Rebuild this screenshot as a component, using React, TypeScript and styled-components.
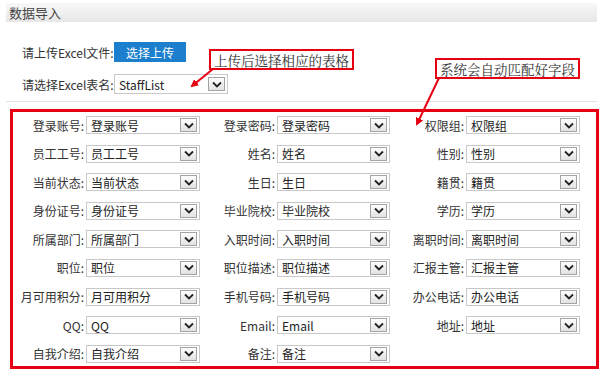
import React from "react";
import styled, { createGlobalStyle } from "styled-components";

const GlobalStyle = createGlobalStyle`
  html, body {
    margin: 0;
    padding: 0;
    background: #ffffff;
  }
  body {
    font-family: "Noto Sans CJK SC", "Liberation Sans", sans-serif;
    color: #333;
  }
`;

const Page = styled.div`
  position: relative;
  width: 600px;
  height: 380px;
  overflow: hidden;
  background: #fff;
`;

const Header = styled.div`
  margin: 3px 3px 0 6px;
  height: 19px;
  display: flex;
  align-items: center;
  padding-left: 3px;
  background: linear-gradient(#f8f8f8, #e7e7e7);
  font-size: 13px;
  color: #444;
`;

const UploadSection = styled.div`
  margin: 0 3px 0 6px;
  padding: 20px 0 7px 16px;
  border-bottom: 1px solid #e2e2e2;
  display: flex;
  flex-direction: column;
  gap: 12px;
`;

const FormLine = styled.div`
  display: flex;
  align-items: center;
  height: 20px;
`;

const FormLabel = styled.span`
  width: 92px;
  font-size: 12px;
  color: #333;
  white-space: nowrap;
`;

const UploadButton = styled.button`
  width: 72px;
  height: 20px;
  border: none;
  padding: 0;
  background: #1c7fcd;
  color: #fff;
  font-family: inherit;
  font-size: 12px;
  cursor: pointer;
`;

const SelectBox = styled.div<{ $w?: number; $h?: number }>`
  box-sizing: border-box;
  width: ${(p) => (p.$w ? `${p.$w}px` : "100%")};
  height: ${(p) => p.$h ?? 18}px;
  border: 1px solid #c8c8c8;
  background: #fff;
  display: flex;
  align-items: center;
  padding-left: 4px;
  font-size: 12px;
  color: #222;
`;

const SelectValue = styled.span`
  flex: 1;
  white-space: nowrap;
  overflow: hidden;
`;

const ArrowButton = styled.span<{ $h?: number }>`
  box-sizing: border-box;
  width: 17px;
  height: ${(p) => p.$h ?? 14}px;
  margin-right: 2px;
  border: 1px solid #a4a4a4;
  background: linear-gradient(#fefefe, #e2e2e2);
  display: flex;
  align-items: center;
  justify-content: center;
`;

const FieldBox = styled.div`
  margin: 7px 0 0 10px;
  width: 589px;
  box-sizing: border-box;
  border: 3px solid #e60012;
  padding: 4px 0 3px 0;
  display: grid;
  grid-template-columns: 73px 114px 77px 113px 76px 114px;
  grid-auto-rows: 18px;
  row-gap: 10.6px;
`;

const FieldLabel = styled.span`
  display: flex;
  align-items: center;
  justify-content: flex-end;
  padding-right: 2px;
  font-size: 12px;
  color: #333;
  white-space: nowrap;
`;

const Callout = styled.div<{ $x: number; $y: number }>`
  position: absolute;
  left: ${(p) => p.$x}px;
  top: ${(p) => p.$y}px;
  box-sizing: border-box;
  height: 21px;
  padding: 0 3px;
  border: 2px solid #e60012;
  background: #fff;
  display: flex;
  align-items: center;
  font-family: "Noto Serif CJK SC", "Liberation Serif", "Noto Sans CJK SC", serif;
  font-size: 13.5px;
  color: #333;
  white-space: nowrap;
`;

const ArrowLayer = styled.svg`
  position: absolute;
  left: 0;
  top: 0;
  pointer-events: none;
`;

const Chevron = () => (
  <svg width="10" height="7" viewBox="0 0 10 7">
    <polyline points="1,1.5 5,5.5 9,1.5" fill="none" stroke="#222" strokeWidth="1.8" />
  </svg>
);

const Select: React.FC<{ value: string; w?: number; h?: number; arrowH?: number }> = ({ value, w, h, arrowH }) => (
  <SelectBox $w={w} $h={h}>
    <SelectValue>{value}</SelectValue>
    <ArrowButton $h={arrowH}>
      <Chevron />
    </ArrowButton>
  </SelectBox>
);

const rows: string[][] = [
  ["登录账号", "登录密码", "权限组"],
  ["员工工号", "姓名", "性别"],
  ["当前状态", "生日", "籍贯"],
  ["身份证号", "毕业院校", "学历"],
  ["所属部门", "入职时间", "离职时间"],
  ["职位", "职位描述", "汇报主管"],
  ["月可用积分", "手机号码", "办公电话"],
  ["QQ", "Email", "地址"],
  ["自我介绍", "备注"],
];

export default function App() {
  return (
    <Page>
      <GlobalStyle />
      <Header>数据导入</Header>
      <UploadSection>
        <FormLine>
          <FormLabel>请上传Excel文件:</FormLabel>
          <UploadButton>选择上传</UploadButton>
        </FormLine>
        <FormLine>
          <FormLabel>请选择Excel表名:</FormLabel>
          <Select value="StaffList" w={114} h={20} arrowH={14} />
        </FormLine>
      </UploadSection>
      <FieldBox>
        {rows.map((row) =>
          row.map((name) => (
            <React.Fragment key={name}>
              <FieldLabel>{name}:</FieldLabel>
              <Select value={name} />
            </React.Fragment>
          ))
        )}
      </FieldBox>

      <Callout $x={209} $y={49}>上传后选择相应的表格</Callout>
      <Callout $x={435} $y={58}>系统会自动匹配好字段</Callout>

      <ArrowLayer width="600" height="380">
        <defs>
          <marker id="head" markerWidth="8" markerHeight="8" refX="6" refY="4" orient="auto" markerUnits="userSpaceOnUse">
            <path d="M0,0 L8,4 L0,8 Z" fill="#e60012" />
          </marker>
        </defs>
        <line x1="213" y1="69" x2="192" y2="86" stroke="#e60012" strokeWidth="2" markerEnd="url(#head)" />
        <line x1="439" y1="78" x2="417" y2="124" stroke="#e60012" strokeWidth="2" markerEnd="url(#head)" />
      </ArrowLayer>
    </Page>
  );
}
